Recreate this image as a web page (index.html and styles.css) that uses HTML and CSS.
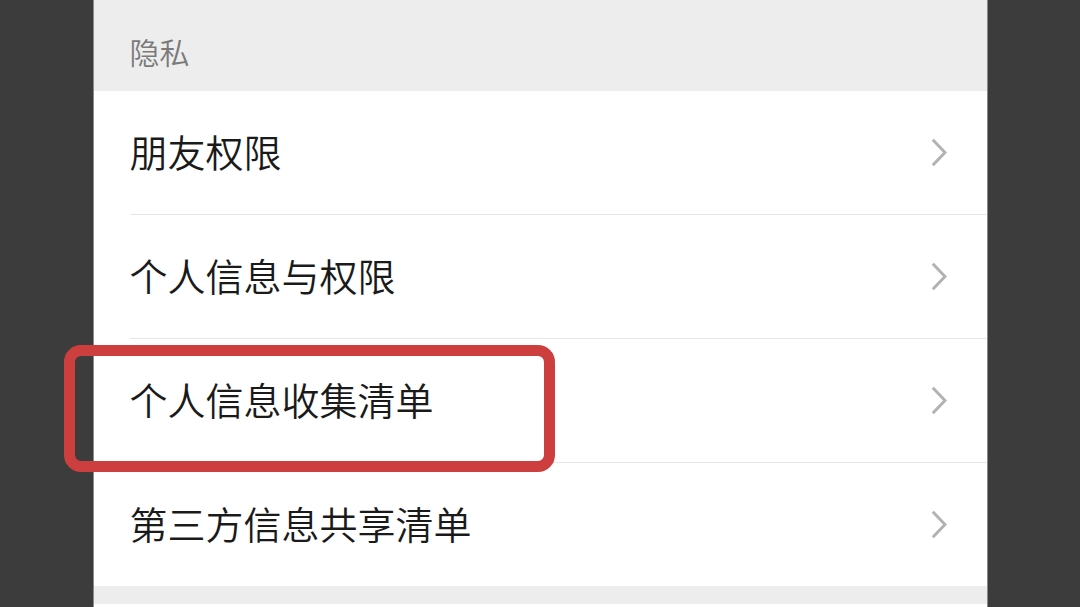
FILE: index.html
```html
<!DOCTYPE html>
<html lang="zh-CN">
<head>
<meta charset="utf-8">
<title>隐私</title>
<link rel="stylesheet" href="styles.css">
</head>
<body>
<div class="page">
  <div class="panel">
    <div class="section-title">隐私</div>
    <div class="list">
      <div class="row"><span class="label">朋友权限</span>
        <svg class="chev" width="16" height="29" viewBox="0 0 16 29"><polyline points="1.8,1.8 14,14.5 1.8,27.2" fill="none" stroke="#b2b2b2" stroke-width="3"/></svg></div>
      <div class="row"><span class="label">个人信息与权限</span>
        <svg class="chev" width="16" height="29" viewBox="0 0 16 29"><polyline points="1.8,1.8 14,14.5 1.8,27.2" fill="none" stroke="#b2b2b2" stroke-width="3"/></svg></div>
      <div class="row"><span class="label">个人信息收集清单</span>
        <svg class="chev" width="16" height="29" viewBox="0 0 16 29"><polyline points="1.8,1.8 14,14.5 1.8,27.2" fill="none" stroke="#b2b2b2" stroke-width="3"/></svg></div>
      <div class="row"><span class="label">第三方信息共享清单</span>
        <svg class="chev" width="16" height="29" viewBox="0 0 16 29"><polyline points="1.8,1.8 14,14.5 1.8,27.2" fill="none" stroke="#b2b2b2" stroke-width="3"/></svg></div>
    </div>
    <div class="gap"></div>
    <div class="list next"></div>
  </div>
  <div class="highlight"></div>
</div>
</body>
</html>
```

FILE: styles.css
```css
html, body {
  margin: 0;
  padding: 0;
  background: #3c3c3c;
  height: 100%;
  overflow: hidden;
}
.page {
  position: relative;
  height: 607px;
  font-family: "Noto Sans CJK SC", "Noto Sans", sans-serif;
}
.panel {
  width: 893px;
  margin: 0 auto;
  height: 607px;
  background: #ededed;
  box-shadow: -1px 0 0 #8a8a8a, 1px 0 0 #8a8a8a;
  overflow: hidden;
}
.section-title {
  height: 91px;
  box-sizing: border-box;
  padding: 29px 0 0 36px;
  font-size: 30px;
  line-height: 44px;
  color: #7a7a7a;
  font-weight: 350;
}
.list {
  background: #ffffff;
}
.row {
  height: 124px;
  box-sizing: border-box;
  margin-left: 36px;
  padding-right: 40px;
  padding-bottom: 4px;
  display: flex;
  align-items: center;
  justify-content: space-between;
  border-bottom: 1px solid #e6e6e6;
}
.row:last-child {
  border-bottom: none;
  height: 123px;
}
.label {
  font-size: 38px;
  line-height: 48px;
  color: #1a1a1a;
  font-weight: 350;
}
.chev {
  display: block;
  margin-top: 4px;
}
.gap {
  height: 18px;
}
.next {
  height: 40px;
}
.highlight {
  position: absolute;
  left: 64px;
  top: 345px;
  width: 491px;
  height: 127px;
  box-sizing: border-box;
  border: 11px solid #cd3f3e;
  border-radius: 17px;
}
```
